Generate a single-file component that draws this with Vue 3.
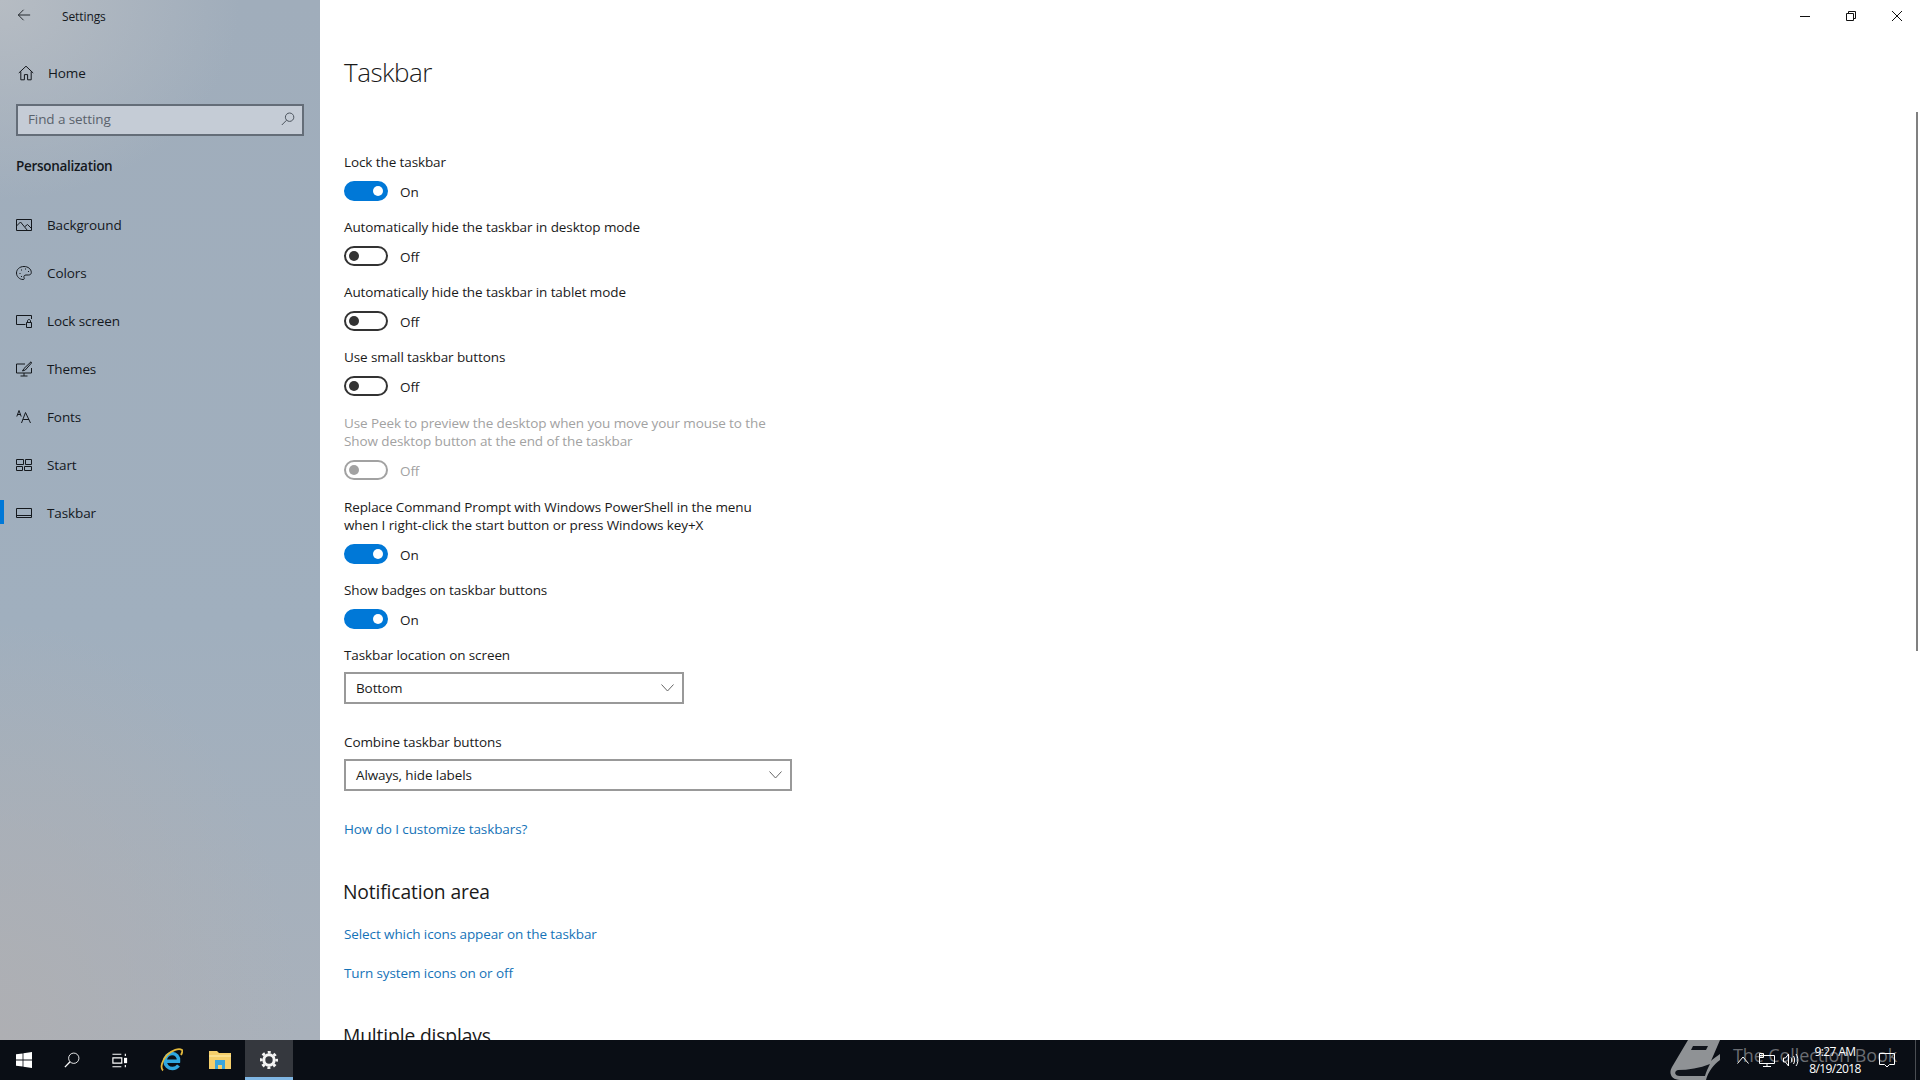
<template>
  <div class="window">
    <div class="main">
      <aside class="sidebar">
        <div class="titlebar">
          <svg class="back" width="14" height="14" viewBox="0 0 16 16"><path d="M15 8H1.500M7.500 2L1.500 8l6 6" /></svg>
          <span>Settings</span>
        </div>
        <div class="home">
          <svg class="nav-icon" width="16" height="16" viewBox="0 0 16 16"><path d="M.8 8L8 1.200 15.200 8M2.800 6.500v8.300h3.600V9.600h3.200v5.200h3.600V6.500" /></svg>
          <span>Home</span>
        </div>
        <div class="search">
          <span>Find a setting</span>
          <svg width="14" height="14" viewBox="0 0 14 14"><circle cx="8.600" cy="5.200" r="4.200" /><path d="M5.600 8.200L.8 13" /></svg>
        </div>
        <div class="group">Personalization</div>
        <nav class="nav">
          <div v-for="item in navItems" :key="item.name" :class="['nav-item', { active: item.name === 'Taskbar' }]">
            <svg class="nav-icon" width="16" height="16" viewBox="0 0 16 16">
              <path v-for="d in item.paths" :key="d" :d="d" />
            </svg>
            <span>{{ item.name }}</span>
          </div>
        </nav>
      </aside>

      <main class="content">
        <h1>Taskbar</h1>
        <div v-for="row in toggles" :key="row.label" :class="['setting', { disabled: row.disabled, tall: row.label.includes('|') }]">
          <div class="label">
            <div v-for="line in row.label.split('|')" :key="line">{{ line }}</div>
          </div>
          <div class="toggle-row">
            <span :class="['toggle', { on: row.on }]"><i></i></span>
            <span class="state">{{ row.on ? 'On' : 'Off' }}</span>
          </div>
        </div>

        <div class="field">
          <div class="label">Taskbar location on screen</div>
          <div class="select narrow">
            <span>Bottom</span>
            <svg width="13" height="8" viewBox="0 0 13 8"><path d="M.5.5l6 6.500 6-6.500" /></svg>
          </div>
        </div>
        <div class="field second">
          <div class="label">Combine taskbar buttons</div>
          <div class="select wide">
            <span>Always, hide labels</span>
            <svg width="13" height="8" viewBox="0 0 13 8"><path d="M.5.5l6 6.500 6-6.500" /></svg>
          </div>
        </div>

        <a class="link first">How do I customize taskbars?</a>
        <h2>Notification area</h2>
        <a class="link">Select which icons appear on the taskbar</a>
        <a class="link next">Turn system icons on or off</a>
        <h2>Multiple displays</h2>
      </main>

      <div class="controls">
        <svg width="12" height="12" viewBox="0 0 12 12"><path d="M1 6.500h10" /></svg>
        <svg width="12" height="12" viewBox="0 0 12 12"><path d="M1.500 3.500h7v7h-7zM3.500 3.500v-2h7v7h-2" /></svg>
        <svg width="12" height="12" viewBox="0 0 12 12"><path d="M1 1l10 10M11 1L1 11" /></svg>
      </div>
      <div class="scrollbar"></div>
    </div>

    <footer class="taskbar">
      <div class="tb-btn">
        <svg width="16" height="16" viewBox="0 0 16 16"><path class="fill" d="M0 2.300l6.600-.9v6.200H0zM7.400 1.300L16 0v7.600H7.400zM0 8.400h6.600v6.200L0 13.700zM7.400 8.400H16V16l-8.600-1.300z" /></svg>
      </div>
      <div class="tb-btn">
        <svg width="16" height="16" viewBox="0 0 18 18"><circle cx="11" cy="7" r="5.800" /><path d="M6.800 11L1 17" stroke-width="1.500" /></svg>
      </div>
      <div class="tb-btn">
        <svg width="16" height="15" viewBox="0 0 18 16"><path d="M.5 1h10M.5 15h10M1 5h10v6H1zM15 .5v2.500M15 13v2.500" stroke-width="1.300" /><path class="fill" d="M13.500 5H17v6h-3.500z" /></svg>
      </div>
      <div class="tb-btn app ie-btn">
        <svg width="24" height="24" viewBox="0 0 24 24">
          <path class="ie" d="M7 13.200H19.500C20 8.500 17 5.500 13 5.500C9 5.500 6 9 6 13.200C6 17.500 9.500 20.500 13.500 20.500C16 20.500 18 19.500 19.500 17.500" />
          <path class="ie-ring" d="M4 22.500C1 20 3 12 8 7C13 2 20 0 23 2C24 3 23 5 22 7" />
        </svg>
      </div>
      <div class="tb-btn app">
        <svg width="22" height="18" viewBox="0 0 22 18">
          <path d="M0 0h8l2 2h12v16H0z" fill="#f5cf6b" stroke="none" />
          <path d="M0 4h22v2H0z" fill="#fbe08e" stroke="none" />
          <path d="M6 9h10v9h-3v-4H9v4H6z" fill="#3aa6dd" stroke="none" />
        </svg>
      </div>
      <div class="tb-btn current">
        <svg class="gear" width="18" height="18" viewBox="0 0 18 18">
          <circle cx="9" cy="9" r="5.200" stroke-width="3" />
          <circle cx="9" cy="9" r="7.700" stroke-width="2.600" stroke-dasharray="3 3.050" stroke-dashoffset="1.500" />
        </svg>
      </div>

      <div class="tray">
        <svg class="book" width="50" height="40" viewBox="0 0 50 40">
          <path d="M18 0H50L41 21C43 19 47 16 50 14V20C44 24 38 32 36 40H10C2 40-2 34 2 27z" fill="#8f9295" stroke="none" />
          <path d="M8 30C18 30 30 28 40 24C38 28 36 32 35 36H10C4 36 4 31 8 30zM23 6H38L36 10H21z" fill="#10141b" stroke="none" />
        </svg>
        <span class="watermark">The Collection Book</span>
        <svg class="chevron" width="12" height="8" viewBox="0 0 12 8"><path d="M.5 7.500L6 1l5.500 6.500" /></svg>
        <svg class="network" width="16" height="14" viewBox="0 0 16 14"><path d="M.5 2.500h15v8H.5zM8 10.500v3M4 13.500h8" /><path d="M.5.500h4v4h-4z" /></svg>
        <svg class="volume" width="16" height="14" viewBox="0 0 16 14"><path d="M.5 5h2l3-4v12l-3-4h-2zM8 4.500c1 1.500 1 3.500 0 5M10.500 3c1.500 2.500 1.500 5.500 0 8M13 1c2.500 3.500 2.500 8.500 0 12" /></svg>
        <div class="clock"><div>9:27 AM</div><div>8/19/2018</div></div>
        <svg class="bubble" width="16" height="16" viewBox="0 0 16 16"><path d="M.5 1.500h15v11h-5l-2.500 2.500-2.500-2.500h-5z" /></svg>
        <div class="show-desktop"></div>
      </div>
    </footer>
  </div>
</template>

<script setup>
const navItems = [
  { name: 'Background', paths: ['M.5 2.500h15v11H.5z', 'M.5 9l4-4 7 8.500M9 9.500l2.500-2 4 4'] },
  { name: 'Colors', paths: ['M8 1.500C3.500 1.500.5 4.500.5 8s3 6.500 6.500 6.500c1.500 0 1.500-1 1-2-.5-1.500.5-2.500 2-2.500h2.500c1.800 0 2.800-1 2.800-2.500C15.300 4 12 1.500 8 1.500z', 'M5 5h1M9 4h1M12 6.500h1M3.500 8.500h1M5 11.500h1'] },
  { name: 'Lock screen', paths: ['M15.500 6V2.500H.5v9h9', 'M10.500 9.500h5v5h-5zM11.500 9.500V8c0-2 3-2 3 0v1.500'] },
  { name: 'Themes', paths: ['M9 3H.5v9h15V7M8 12v3M4.500 15h7', 'M15 .8L8 7.500 6.500 10l2.800-1L15.500 2z'] },
  { name: 'Fonts', paths: ['M.8 7.500L3 1.500l2.200 6M1.500 5.500h3', 'M5.500 14L9.500 3.500 14.500 14M7.200 10.500h5.800'] },
  { name: 'Start', paths: ['M.5 2.500h7v5h-7zM9.500 2.500h6v5h-6zM.5 9.500h6v4h-6zM8.500 9.500h7v4h-7z'] },
  { name: 'Taskbar', paths: ['M.5 3.500h15v9H.5zM.5 10.500h15'] },
]

const toggles = [
  { label: 'Lock the taskbar', on: true },
  { label: 'Automatically hide the taskbar in desktop mode', on: false },
  { label: 'Automatically hide the taskbar in tablet mode', on: false },
  { label: 'Use small taskbar buttons', on: false },
  { label: 'Use Peek to preview the desktop when you move your mouse to the|Show desktop button at the end of the taskbar', on: false, disabled: true },
  { label: 'Replace Command Prompt with Windows PowerShell in the menu|when I right-click the start button or press Windows key+X', on: true },
  { label: 'Show badges on taskbar buttons', on: true },
]
</script>

<style>
html, body {
  margin: 0;
  overflow: hidden;
}
</style>

<style scoped>
.window {
  width: 1920px;
  height: 1080px;
  display: flex;
  flex-direction: column;
  font-family: "Open Sans", "Noto Sans", sans-serif;
  font-size: 13.5px;
  letter-spacing: -0.1px;
  color: #1a1a1a;
  background: #fff;
  overflow: hidden;
}

svg {
  fill: none;
  stroke: currentColor;
  stroke-width: 1;
  flex-shrink: 0;
}

svg .fill {
  fill: currentColor;
  stroke: none;
}

.main {
  flex: 1;
  min-height: 0;
  display: flex;
  position: relative;
}

.sidebar {
  width: 320px;
  flex-shrink: 0;
  background:
    radial-gradient(ellipse 240px 200px at 0 0, #b6bcc3, rgba(182, 188, 195, 0)),
    radial-gradient(ellipse 300px 420px at 0 100%, #aeafb3, rgba(174, 175, 179, 0)),
    linear-gradient(180deg, #a0adbb 0%, #a0afbe 60%, #a9b1bb 100%);
  color: #14181d;
}

.titlebar {
  height: 32px;
  display: flex;
  align-items: center;
  padding-left: 17px;
  font-size: 12px;
}

.back {
  margin-right: 31px;
  margin-top: -2px;
}

.home {
  height: 40px;
  margin-top: 21px;
  display: flex;
  align-items: center;
  padding-left: 18px;
  gap: 14px;
}

.search {
  margin: 11px 0 0 16px;
  width: 288px;
  height: 32px;
  box-sizing: border-box;
  border: 2px solid #646d78;
  background: #c5ccd6;
  display: flex;
  align-items: center;
  justify-content: space-between;
  padding: 0 7px 2px 10px;
  color: #5a626c;
}

.search svg {
  color: #4c545e;
}

.group {
  margin: 20px 0 0 16px;
  font-weight: 600;
  line-height: 20px;
  letter-spacing: -0.3px;
}

.nav {
  margin-top: 25px;
}

.nav-item {
  height: 48px;
  display: flex;
  align-items: center;
  padding-left: 16px;
  gap: 15px;
  position: relative;
}

.nav-item.active::before {
  content: "";
  position: absolute;
  left: 0;
  top: 11px;
  width: 4px;
  height: 24px;
  background: #0078d7;
}

.content {
  flex: 1;
  min-width: 0;
  padding-left: 24px;
  overflow: hidden;
}

h1 {
  margin: 50px 0 0;
  font-size: 26px;
  font-weight: 300;
  line-height: 44px;
  letter-spacing: -0.5px;
}

.setting:first-of-type {
  margin-top: 59px;
}

.setting.tall {
  padding-top: 1px;
}

.label {
  line-height: 18px;
}

.setting .label {
  padding-bottom: 10px;
}

.toggle-row {
  height: 20px;
  display: flex;
  align-items: center;
  gap: 12px;
  margin-bottom: 17px;
}

.state {
  padding-top: 2px;
}

.toggle {
  width: 44px;
  height: 20px;
  box-sizing: border-box;
  border: 2px solid #333;
  border-radius: 10px;
  display: flex;
  align-items: center;
  padding-left: 3px;
}

.toggle i {
  width: 10px;
  height: 10px;
  border-radius: 50%;
  background: #333;
}

.toggle.on {
  background: #0078d7;
  border-color: #0078d7;
  padding-left: 27px;
}

.toggle.on i {
  background: #fff;
}

.disabled {
  color: #a2a2a2;
}

.disabled .toggle {
  border-color: #a2a2a2;
}

.disabled .toggle i {
  background: #a2a2a2;
}

.field .label {
  padding-bottom: 8px;
}

.field.second {
  margin-top: 29px;
}

.select {
  height: 32px;
  box-sizing: border-box;
  border: 2px solid #999;
  display: flex;
  align-items: center;
  justify-content: space-between;
  padding: 0 8px 0 10px;
}

.select svg {
  color: #666;
}

.narrow {
  width: 340px;
}

.wide {
  width: 448px;
}

.link {
  display: block;
  color: #1573b8;
  line-height: 20px;
}

.link.first {
  margin-top: 28px;
}

.link.next {
  margin-top: 19px;
}

h2 {
  margin: 38px 0 0 -1px;
  font-size: 19.300px;
  font-weight: 400;
  line-height: 30px;
  padding-bottom: 17px;
  letter-spacing: -0.15px;
}

.controls {
  position: absolute;
  top: 10px;
  right: 17px;
  display: flex;
  gap: 34px;
  color: #111;
}

.scrollbar {
  position: absolute;
  right: 2px;
  top: 112px;
  width: 2px;
  height: 539px;
  background: #808080;
}

.taskbar {
  height: 40px;
  flex-shrink: 0;
  background: #0a0e15;
  color: #fff;
  display: flex;
  align-items: stretch;
}

.tb-btn {
  width: 48px;
  display: flex;
  align-items: center;
  justify-content: center;
  box-sizing: border-box;
}

.tb-btn.app {
  width: 49px;
}

.ie-btn {
  margin-left: 2px;
}

.tb-btn.current {
  margin-left: 1px;
  background: #35383e;
  border-bottom: 3px solid #7fb6e3;
  padding-top: 3px;
}

.gear {
  stroke: #f4f4f4;
}

.ie {
  stroke: #2fa8e0;
  stroke-width: 3.500;
}

.ie-ring {
  stroke: #e3b93c;
  stroke-width: 1.800;
}

.tray {
  margin-left: auto;
  display: flex;
  align-items: center;
  position: relative;
  font-size: 12px;
}

.book {
  position: absolute;
  left: -67px;
  top: 0;
}

.watermark {
  position: absolute;
  left: -4px;
  top: 0;
  line-height: 30px;
  font-size: 18px;
  color: #6a6d72;
  white-space: nowrap;
}

.tray > svg {
  position: relative;
}

.tray > .book {
  position: absolute;
}

.network {
  margin-left: 10px;
}

.volume {
  margin-left: 8px;
}

.clock {
  width: 52px;
  margin-left: 10px;
  text-align: center;
  line-height: 17px;
  letter-spacing: -0.6px;
  white-space: nowrap;
  position: relative;
}

.bubble {
  margin-left: 18px;
}

.show-desktop {
  width: 1px;
  height: 40px;
  background: #4a4d52;
  margin-left: 20px;
  margin-right: 4px;
}
</style>
